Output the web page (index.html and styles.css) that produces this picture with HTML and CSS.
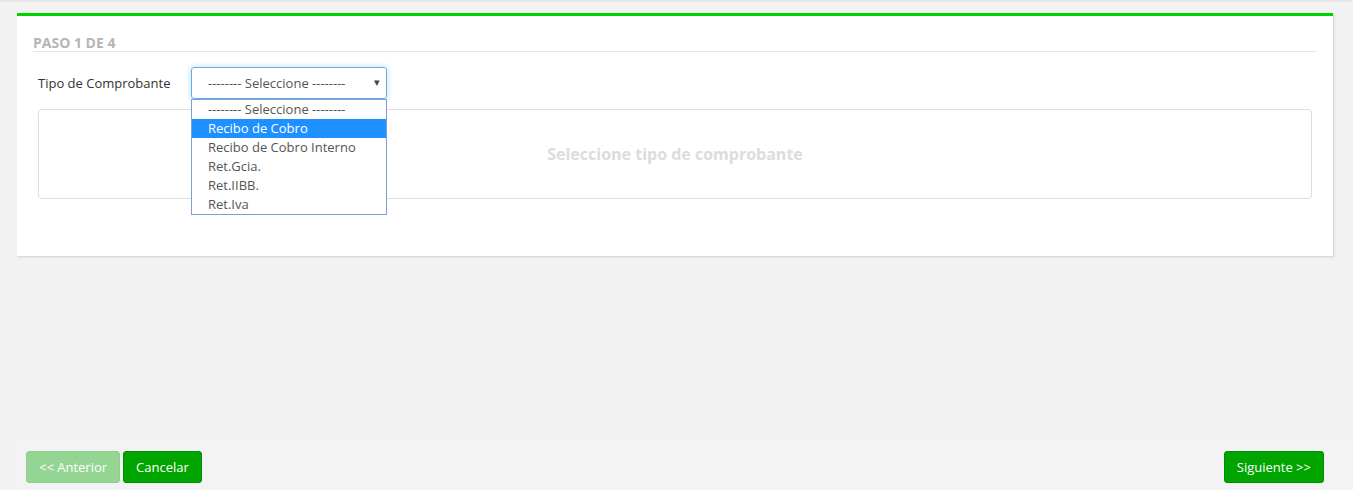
FILE: index.html
```html
<!DOCTYPE html>
<html lang="es">
<head>
  <meta charset="UTF-8">
  <title>Nuevo comprobante</title>
  <link rel="stylesheet" href="styles.css">
</head>
<body>
  <div class="page">
    <section class="card">
      <h4 class="step">Paso 1 de 4</h4>

      <div class="form-row">
        <label class="label">Tipo de Comprobante</label>
        <div class="select-wrap">
          <div class="select">
            <span>-------- Seleccione --------</span>
            <span class="caret">&#9662;</span>
          </div>
          <ul class="options">
            <li>-------- Seleccione --------</li>
            <li class="active">Recibo de Cobro</li>
            <li>Recibo de Cobro Interno</li>
            <li>Ret.Gcia.</li>
            <li>Ret.IIBB.</li>
            <li>Ret.Iva</li>
          </ul>
        </div>
      </div>

      <div class="empty">Seleccione tipo de comprobante</div>
    </section>
  </div>

  <footer class="actions">
    <div class="left">
      <button class="btn disabled">&lt;&lt; Anterior</button>
      <button class="btn">Cancelar</button>
    </div>
    <button class="btn">Siguiente &gt;&gt;</button>
  </footer>
</body>
</html>
```

FILE: styles.css
```css
html, body {
  height: 100%;
}
body {
  margin: 0;
  font-family: "Open Sans", sans-serif;
  font-size: 13px;
  color: #333;
  background: #f2f2f2;
  border-top: 2px solid #e8e8e8;
  box-sizing: border-box;
  display: flex;
  flex-direction: column;
}
.page {
  flex: 1;
  padding: 11px 20px 0 17px;
}
.card {
  background: #fff;
  border-top: 3px solid #00d200;
  box-shadow: 1px 1px 2px rgba(0,0,0,0.15);
  padding: 19px 16px 0 16px;
  height: 243px;
  box-sizing: border-box;
}
.step {
  margin: 0;
  font-size: 14px;
  font-weight: 700;
  color: #b5b5b5;
  text-transform: uppercase;
  line-height: 16px;
  border-bottom: 1px solid #e5e5e5;
}
.form-row {
  display: flex;
  align-items: center;
  margin-top: 15px;
  padding-left: 5px;
}
.label {
  width: 153px;
  color: #333;
}
.select-wrap {
  position: relative;
}
.select {
  width: 196px;
  height: 32px;
  box-sizing: border-box;
  border: 1px solid #66afe9;
  border-radius: 3px;
  box-shadow: 0 0 6px rgba(102,175,233,0.45);
  display: flex;
  align-items: center;
  justify-content: space-between;
  padding: 0 6px 0 16px;
  color: #555;
}
.caret {
  font-size: 11px;
  color: #444;
  margin-top: -4px;
}
.options {
  position: absolute;
  top: 32px;
  left: 0;
  width: 196px;
  box-sizing: border-box;
  margin: 0;
  padding: 0;
  list-style: none;
  background: #fff;
  border: 1px solid #7b9fd6;
  z-index: 5;
}
.options li {
  height: 19px;
  line-height: 19px;
  padding-left: 16px;
  color: #555;
}
.options li.active {
  background: #1e90ff;
  color: #fff;
}
.empty {
  margin: 10px 5px 0 5px;
  height: 90px;
  box-sizing: border-box;
  border: 1px solid #dedede;
  border-radius: 4px;
  display: flex;
  align-items: center;
  justify-content: center;
  font-size: 16px;
  font-weight: 700;
  color: #dcdcdc;
}
.actions {
  display: flex;
  justify-content: space-between;
  align-items: center;
  margin-left: 16px;
  padding: 11px 29px 7px 10px;
  background: #f3f3f3;
}
.left {
  display: flex;
  gap: 3px;
}
.btn {
  font-family: "Open Sans", sans-serif;
  font-size: 13px;
  color: #fff;
  background: #00a500;
  border: 1px solid #009000;
  border-radius: 3px;
  height: 32px;
  padding: 0 12px;
}
.btn.disabled {
  background: #94d594;
  border-color: #8ccf8c;
  padding: 0 12px;
}
```
